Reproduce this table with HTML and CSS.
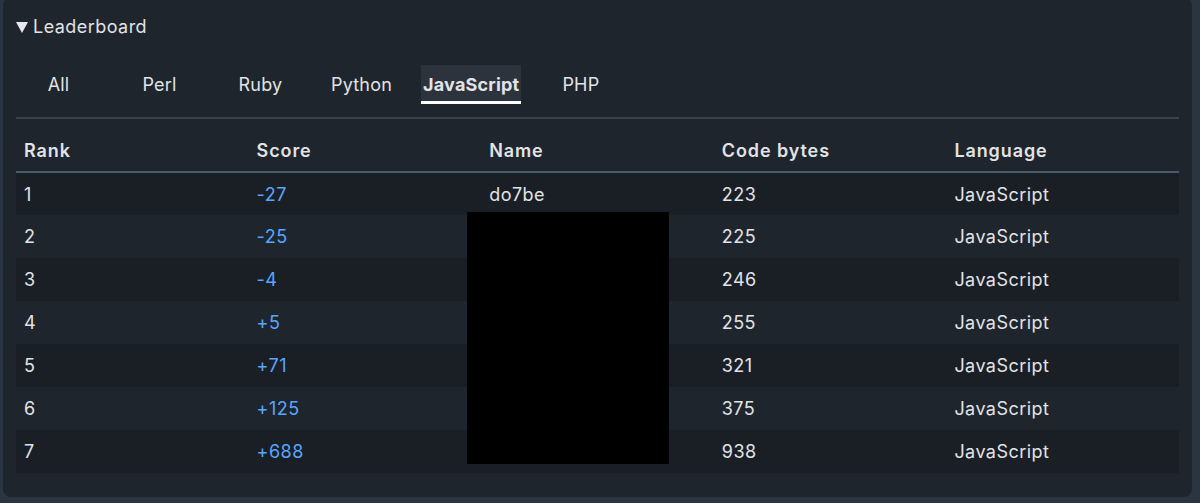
FILE: index.html
```html
<!DOCTYPE html>
<html lang="en">
<head>
<meta charset="utf-8">
<title>Leaderboard</title>
<link rel="stylesheet" href="styles.css">
</head>
<body>
<section class="card">
  <div class="summary">
    <svg class="caret" width="12" height="12" viewBox="0 0 12 12"><polygon points="0,1 12,1 6,12" fill="#e6e8eb"/></svg>
    <span>Leaderboard</span>
  </div>
  <nav class="tabs">
    <span class="tab">All</span>
    <span class="tab">Perl</span>
    <span class="tab">Ruby</span>
    <span class="tab">Python</span>
    <span class="tab active">JavaScript</span>
    <span class="tab">PHP</span>
  </nav>
  <div class="table-wrap">
    <table class="board">
      <thead>
        <tr><th>Rank</th><th>Score</th><th>Name</th><th>Code bytes</th><th>Language</th></tr>
      </thead>
      <tbody>
        <tr><td>1</td><td class="score">-27</td><td>do7be</td><td>223</td><td>JavaScript</td></tr>
        <tr><td>2</td><td class="score">-25</td><td></td><td>225</td><td>JavaScript</td></tr>
        <tr><td>3</td><td class="score">-4</td><td></td><td>246</td><td>JavaScript</td></tr>
        <tr><td>4</td><td class="score">+5</td><td></td><td>255</td><td>JavaScript</td></tr>
        <tr><td>5</td><td class="score">+71</td><td></td><td>321</td><td>JavaScript</td></tr>
        <tr><td>6</td><td class="score">+125</td><td></td><td>375</td><td>JavaScript</td></tr>
        <tr><td>7</td><td class="score">+688</td><td></td><td>938</td><td>JavaScript</td></tr>
      </tbody>
    </table>
    <div class="redact"></div>
  </div>
</section>
</body>
</html>
```

FILE: styles.css
```css
html, body {
  margin: 0;
  padding: 0;
  background: #2b3541;
  height: 503px;
  overflow: hidden;
}
body {
  font-family: Inter, "Noto Sans", sans-serif;
  color: #e1e3e6;
  letter-spacing: 0.45px;
}
.card {
  margin: -3px 8px 0 3px;
  padding: 17px 13px 24px 13px;
  background: #1f252d;
  border-radius: 8px;
}
.summary {
  display: flex;
  align-items: center;
  gap: 5px;
  height: 24px;
  font-size: 18px;
  line-height: 24px;
  padding-top: 1px;
  margin-bottom: -1px;
}
.caret {
  flex: none;
  margin-top: 0;
}
.tabs {
  display: flex;
  gap: 18px;
  margin-top: 27px;
  padding: 0 0 13px 1px;
  border-bottom: 2px solid #3a424c;
}
.tab {
  min-width: 83px;
  box-sizing: border-box;
  height: 39px;
  padding: 1px 2px 2px;
  display: flex;
  align-items: center;
  justify-content: center;
  font-size: 18px;
  letter-spacing: 0.2px;
  white-space: nowrap;
}
.tab.active {
  font-weight: 700;
  background: #2c333c;
  border-bottom: 3px solid #ffffff;
  padding-bottom: 0;
  padding-top: 2px;
}
.table-wrap {
  position: relative;
  margin-top: 10px;
}
.board {
  width: 100%;
  border-collapse: collapse;
  table-layout: fixed;
  font-size: 18px;
}
.board th {
  text-align: left;
  font-weight: 600;
  letter-spacing: 0.9px;
  height: 42px;
  padding: 0 8px;
  border-bottom: 2px solid #4a596b;
}
.board td {
  height: 43px;
  padding: 0 8px;
  box-sizing: border-box;
}
.board tbody tr:nth-child(odd) {
  background: #1a1f26;
}
.score {
  color: #58a6ff;
}
.redact {
  position: absolute;
  left: 451px;
  top: 83px;
  width: 202px;
  height: 252px;
  background: #000;
}
```
